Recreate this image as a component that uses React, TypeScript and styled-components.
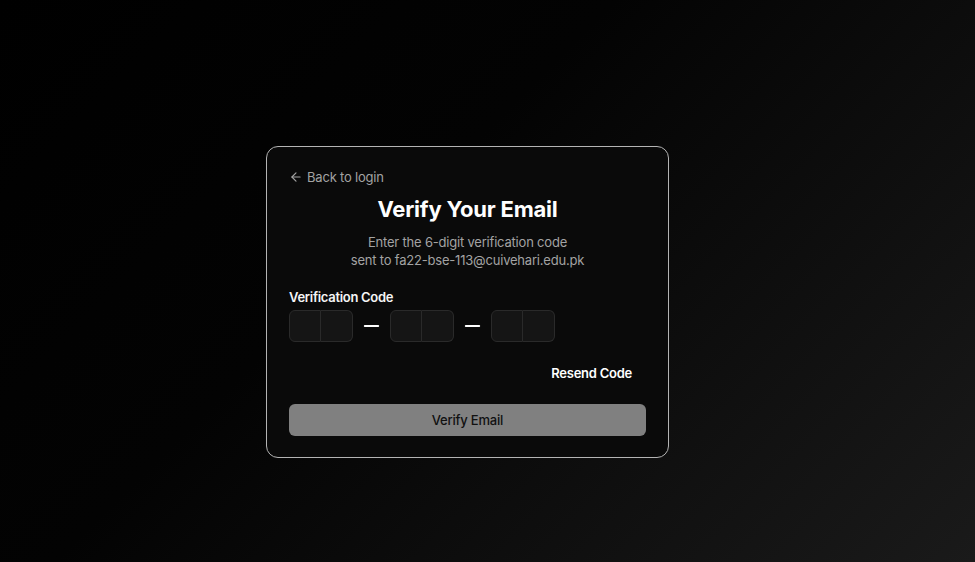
import React from "react";
import styled, { createGlobalStyle } from "styled-components";

const Global = createGlobalStyle`
  html, body { margin: 0; padding: 0; }
  body {
    font-family: Inter, "Noto Sans", "Liberation Sans", sans-serif;
    background: #000;
    -webkit-font-smoothing: antialiased;
  }
  * { box-sizing: border-box; }
`;

const Page = styled.div`
  min-height: 562px;
  width: 100%;
  display: flex;
  align-items: center;
  justify-content: center;
  padding: 41px 40px 0 0;
  background: linear-gradient(135deg, #000000 0%, #030303 40%, #1a1a1a 100%);
`;

const Card = styled.div`
  width: 403px;
  border: 1px solid #b4b4b4;
  border-radius: 12px;
  background: #0a0a0a;
  padding: 22px 22px 21px;
  display: flex;
  flex-direction: column;
`;

const BackLink = styled.a`
  display: flex;
  align-items: center;
  gap: 4px;
  align-self: flex-start;
  height: 16px;
  font-size: 13px;
  line-height: 16px;
  letter-spacing: -0.2px;
  color: #a3a3a3;
  text-decoration: none;
  cursor: pointer;
  svg { flex-shrink: 0; }
`;

const Title = styled.h1`
  margin: 10px 0 0;
  font-size: 22px;
  line-height: 28px;
  font-weight: 700;
  color: #ffffff;
  text-align: center;
  letter-spacing: -0.2px;
`;

const Subtitle = styled.p`
  margin: 10px 0 0;
  font-size: 13px;
  line-height: 18px;
  letter-spacing: -0.2px;
  color: #a3a3a3;
  text-align: center;
`;

const Label = styled.label`
  margin-top: 20px;
  font-size: 13px;
  line-height: 16px;
  font-weight: 600;
  letter-spacing: -0.3px;
  color: #f5f5f5;
`;

const OtpRow = styled.div`
  margin-top: 5px;
  display: flex;
  align-items: center;
  gap: 7px;
`;

const Group = styled.div`
  display: flex;
`;

const Slot = styled.div<{ $pos: "first" | "last" }>`
  width: 32px;
  height: 32px;
  background: #151515;
  border: 1px solid #2a2a2a;
  border-left-width: ${(p) => (p.$pos === "first" ? "1px" : "0")};
  border-radius: ${(p) => (p.$pos === "first" ? "6px 0 0 6px" : "0 6px 6px 0")};
`;

const Separator = styled.div`
  width: 23px;
  height: 24px;
  display: flex;
  align-items: center;
  justify-content: center;
  color: #ffffff;
`;

const ResendRow = styled.div`
  margin-top: 15px;
  display: flex;
  justify-content: flex-end;
`;

const GhostButton = styled.button`
  height: 32px;
  padding: 0 14px;
  background: transparent;
  border: none;
  font-family: inherit;
  font-size: 13px;
  font-weight: 600;
  letter-spacing: -0.25px;
  color: #ffffff;
  cursor: pointer;
`;

const PrimaryButton = styled.button`
  margin-top: 15px;
  height: 32px;
  width: 100%;
  border: none;
  border-radius: 6px;
  background: #808080;
  color: #111111;
  font-family: inherit;
  font-size: 13px;
  font-weight: 500;
  letter-spacing: -0.2px;
  cursor: pointer;
`;

const ArrowLeft = () => (
  <svg width="14" height="14" viewBox="0 0 24 24" fill="none" stroke="currentColor" strokeWidth="2" strokeLinecap="round" strokeLinejoin="round">
    <path d="m12 19-7-7 7-7" />
    <path d="M19 12H5" />
  </svg>
);

const Minus = () => (
  <svg width="24" height="24" viewBox="0 0 24 24" fill="none" stroke="currentColor" strokeWidth="2" strokeLinecap="round">
    <path d="M5 12h14" />
  </svg>
);

const OtpGroup = () => (
  <Group>
    <Slot $pos="first" />
    <Slot $pos="last" />
  </Group>
);

export default function App() {
  return (
    <>
      <Global />
      <Page>
        <Card>
          <BackLink>
            <ArrowLeft />
            Back to login
          </BackLink>
          <Title>Verify Your Email</Title>
          <Subtitle>
            Enter the 6-digit verification code
            <br />
            sent to fa22-bse-113@cuivehari.edu.pk
          </Subtitle>
          <Label>Verification Code</Label>
          <OtpRow>
            <OtpGroup />
            <Separator><Minus /></Separator>
            <OtpGroup />
            <Separator><Minus /></Separator>
            <OtpGroup />
          </OtpRow>
          <ResendRow>
            <GhostButton>Resend Code</GhostButton>
          </ResendRow>
          <PrimaryButton>Verify Email</PrimaryButton>
        </Card>
      </Page>
    </>
  );
}
